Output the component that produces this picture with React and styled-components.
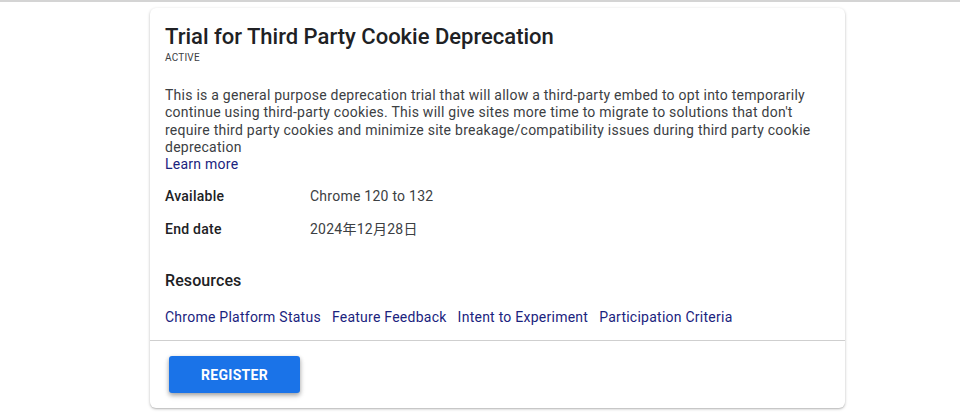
import React from "react";
import styled, { createGlobalStyle } from "styled-components";

const GlobalStyle = createGlobalStyle`
  body {
    margin: 0;
    background: #fff;
    font-family: Roboto, "Noto Sans CJK JP", sans-serif;
    color: #202124;
  }
`;

const Page = styled.div`
  border-top: 2px solid #d4d4d4;
  padding: 6px 0 12px 150px;
`;

const Card = styled.section`
  width: 695px;
  background: #fff;
  border-radius: 6px;
  box-shadow: 0 1px 3px rgba(0, 0, 0, 0.25), 0 1px 1px rgba(0, 0, 0, 0.08);
`;

const Body = styled.div`
  padding: 15px 15px 13px;
`;

const Title = styled.h2`
  margin: 0;
  font-size: 22px;
  line-height: 28px;
  font-weight: 500;
  color: #202124;
`;

const Status = styled.div`
  margin-top: 0;
  font-size: 10px;
  line-height: 14px;
  letter-spacing: 0.2px;
  text-transform: uppercase;
  color: #3c4043;
`;

const Description = styled.p`
  margin: 22px 0 0;
  font-size: 14px;
  line-height: 17.25px;
  letter-spacing: 0.25px;
  color: #3c4043;
`;

const Link = styled.a`
  color: #1a237e;
  text-decoration: none;
  font-size: 14px;
  letter-spacing: 0.25px;
`;

const BlockLink = styled(Link)`
  display: block;
  line-height: 17.25px;
`;

const Details = styled.div`
  margin-top: 13px;
  display: grid;
  grid-template-columns: 145px 1fr;
  row-gap: 13px;
  font-size: 14px;
  line-height: 20px;
  letter-spacing: 0.25px;
`;

const Label = styled.div`
  font-weight: 500;
  color: #202124;
`;

const Value = styled.div`
  color: #3c4043;
`;

const SectionTitle = styled.h3`
  margin: 30px 0 0;
  font-size: 16px;
  line-height: 24px;
  font-weight: 500;
  letter-spacing: 0.1px;
  color: #202124;
`;

const LinkRow = styled.div`
  margin-top: 14px;
  display: flex;
  gap: 11px;
  line-height: 20px;
`;

const Footer = styled.div`
  border-top: 1px solid #cfcfcf;
  padding: 15px 19px 15px;
`;

const Button = styled.button`
  width: 131px;
  height: 37px;
  border: none;
  border-radius: 3px;
  background: #1a73e8;
  color: #fff;
  font-family: Roboto, sans-serif;
  font-size: 14px;
  font-weight: 700;
  letter-spacing: 0.3px;
  text-transform: uppercase;
  box-shadow: 0 2px 4px rgba(0, 0, 0, 0.3), 0 3px 6px rgba(0, 0, 0, 0.12);
  cursor: pointer;
`;

const details = [
  { label: "Available", value: "Chrome 120 to 132" },
  { label: "End date", value: "2024年12月28日" },
];

const resources = [
  "Chrome Platform Status",
  "Feature Feedback",
  "Intent to Experiment",
  "Participation Criteria",
];

export default function App() {
  return (
    <>
      <GlobalStyle />
      <Page>
        <Card>
          <Body>
            <Title>Trial for Third Party Cookie Deprecation</Title>
            <Status>Active</Status>
            <Description>
              This is a general purpose deprecation trial that will allow a
              third-party embed to opt into temporarily continue using
              third-party cookies. This will give sites more time to migrate to
              solutions that don't require third party cookies and minimize site
              breakage/compatibility issues during third party cookie
              deprecation
            </Description>
            <BlockLink href="#">Learn more</BlockLink>
            <Details>
              {details.map((d) => (
                <React.Fragment key={d.label}>
                  <Label>{d.label}</Label>
                  <Value>{d.value}</Value>
                </React.Fragment>
              ))}
            </Details>
            <SectionTitle>Resources</SectionTitle>
            <LinkRow>
              {resources.map((r) => (
                <Link key={r} href="#">
                  {r}
                </Link>
              ))}
            </LinkRow>
          </Body>
          <Footer>
            <Button>Register</Button>
          </Footer>
        </Card>
      </Page>
    </>
  );
}
